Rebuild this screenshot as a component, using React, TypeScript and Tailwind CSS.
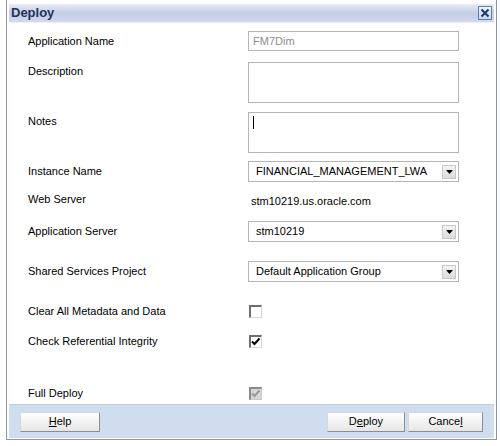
import React from "react";

const font = { fontFamily: '"Liberation Sans", Arial, sans-serif' };

function TextBox({ value, tall, cursor }: { value?: string; tall?: boolean; cursor?: boolean }) {
  return (
    <div
      className={`relative w-[211px] border border-[#b5b5b5] bg-white ${tall ? "h-[41px]" : "h-[20px]"} px-[4px] flex ${tall ? "items-start pt-[2px]" : "items-center"}`}
    >
      {value && <span className="text-[11px] text-[#8c8c8c]">{value}</span>}
      {cursor && <span className="mt-[1px] block w-[1px] h-[13px] bg-black" />}
    </div>
  );
}

function Select({ value }: { value: string }) {
  return (
    <div className="w-[211px] h-[21px] border border-[#b5b5b5] bg-white flex items-center justify-between pl-[7px] pr-[2px]">
      <span className="text-[11px] text-black">{value}</span>
      <span className="w-[14px] h-[14px] bg-gradient-to-b from-[#f4f4f4] to-[#dcdcdc] border border-[#c8c8c8] flex items-center justify-center">
        <svg width="7" height="4" viewBox="0 0 7 4">
          <path d="M0 0H7L3.5 4Z" fill="#000" />
        </svg>
      </span>
    </div>
  );
}

function Check({ checked, disabled }: { checked?: boolean; disabled?: boolean }) {
  return (
    <span
      className={`block w-[13px] h-[13px] border-t-2 border-l-2 border-r border-b ${disabled ? "border-t-[#8a8a8a] border-l-[#8a8a8a] border-r-[#c8c8c8] border-b-[#c8c8c8] bg-[#d8d8d8]" : "border-t-[#6f6f6f] border-l-[#6f6f6f] border-r-[#d8d8d8] border-b-[#d8d8d8] bg-white"}`}
    >
      {checked && (
        <svg width="10" height="10" viewBox="0 0 10 10" className="block">
          <path d="M1 4.5L3.5 7L8.5 1.5" fill="none" stroke={disabled ? "#9a9a9a" : "#000"} strokeWidth="2" />
        </svg>
      )}
    </span>
  );
}

function Row({ label, h, mt, top, children }: { label: string; h: string; mt: string; top?: boolean; children?: React.ReactNode }) {
  return (
    <div className={`flex ${top ? "items-start" : "items-center"} ${h} ${mt}`}>
      <div className={`w-[239px] pl-[19px] text-[11px] text-black ${top ? "pt-[1px]" : ""}`}>{label}</div>
      <div>{children}</div>
    </div>
  );
}

function Button({ children, w }: { children: React.ReactNode; w: string }) {
  return (
    <button
      className={`${w} h-[20px] text-[11px] text-black bg-gradient-to-b from-white to-[#e6e6e6] border border-t-[#d8d8d8] border-l-[#d8d8d8] border-r-[#8d8d8d] border-b-[#8d8d8d] flex items-center justify-center`}
    >
      {children}
    </button>
  );
}

export default function App() {
  return (
    <div className="w-[500px] h-[446px] bg-white" style={font}>
      <div className="ml-[6px] w-[491px] h-[440px] border-x border-b border-[#8c96aa] flex flex-col px-[2px] pt-[4px]">
        {/* title bar */}
        <div className="h-[19px] bg-gradient-to-b from-[#e9edf7] via-[#c4cce5] to-[#d3d9ee] border-b border-[#eef1f9] flex items-center justify-between pl-[2px] pr-[2px]">
          <span className="text-[13px] font-bold text-[#1f355c]">Deploy</span>
          <span className="w-[14px] h-[14px] border border-[#5b7fb5] bg-gradient-to-b from-[#f2f6fc] to-[#c9d8ee] flex items-center justify-center">
            <svg width="10" height="10" viewBox="0 0 10 10">
              <path d="M1.5 1.5L8.5 8.5M8.5 1.5L1.5 8.5" stroke="#1d3d7a" strokeWidth="2.2" />
            </svg>
          </span>
        </div>

        {/* body */}
        <div className="flex-1 flex flex-col">
          <Row label="Application Name" h="h-[20px]" mt="mt-[8px]">
            <TextBox value="FM7Dim" />
          </Row>
          <Row label="Description" h="h-[41px]" mt="mt-[11px]" top>
            <TextBox tall />
          </Row>
          <Row label="Notes" h="h-[41px]" mt="mt-[9px]" top>
            <TextBox tall cursor />
          </Row>
          <Row label="Instance Name" h="h-[21px]" mt="mt-[8px]">
            <Select value="FINANCIAL_MANAGEMENT_LWA" />
          </Row>
          <Row label="Web Server" h="h-[19px]" mt="mt-[8px]">
            <span className="pl-[3px] text-[11px] text-black">stm10219.us.oracle.com</span>
          </Row>
          <Row label="Application Server" h="h-[21px]" mt="mt-[12px]">
            <Select value="stm10219" />
          </Row>
          <Row label="Shared Services Project" h="h-[21px]" mt="mt-[19px]">
            <Select value="Default Application Group" />
          </Row>
          <Row label="Clear All Metadata and Data" h="h-[17px]" mt="mt-[21px]">
            <div className="pl-[1px]">
              <Check />
            </div>
          </Row>
          <Row label="Check Referential Integrity" h="h-[17px]" mt="mt-[13px]">
            <div className="pl-[1px]">
              <Check checked />
            </div>
          </Row>
          <Row label="Full Deploy" h="h-[17px]" mt="mt-[35px]">
            <div className="pl-[1px]">
              <Check checked disabled />
            </div>
          </Row>

          {/* footer */}
          <div className="mt-[2px] h-[34px] bg-[#cfddef] border-t border-[#c0cde0] flex items-center justify-between pl-[11px] pr-[11px]">
            <Button w="w-[80px]">
              <span>
                <span className="underline">H</span>elp
              </span>
            </Button>
            <div className="flex gap-[3px]">
              <Button w="w-[78px]">
                <span>
                  D<span className="underline">e</span>ploy
                </span>
              </Button>
              <Button w="w-[75px]">
                <span>
                  Cance<span className="underline">l</span>
                </span>
              </Button>
            </div>
          </div>
        </div>
      </div>
    </div>
  );
}
